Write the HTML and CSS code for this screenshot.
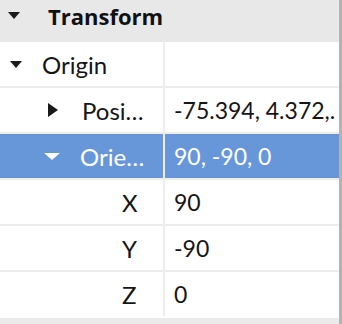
FILE: index.html
```html
<!DOCTYPE html>
<html lang="en">
<head>
  <meta charset="UTF-8">
  <meta name="viewport" content="width=device-width, initial-scale=1.0">
  <title>Properties - Transform</title>
  <link rel="stylesheet" href="styles.css">
</head>
<body>
  <div class="panel">
    <div class="section-header">
      <span class="arrow arrow-down header-arrow"></span>
      <span class="section-title">Transform</span>
    </div>

    <div class="tree">
      <div class="cell name level-0">
        <span class="arrow arrow-down"></span>
        <span class="label">Origin</span>
      </div>
      <div class="cell value"></div>

      <div class="cell name level-1">
        <span class="arrow arrow-right"></span>
        <span class="label">Position</span>
      </div>
      <div class="cell value">-75.394, 4.372,.</div>

      <div class="cell name level-1 selected">
        <span class="arrow arrow-down white"></span>
        <span class="label">Orientation</span>
      </div>
      <div class="cell value selected">90, -90, 0</div>

      <div class="cell name level-2">
        <span class="label">X</span>
      </div>
      <div class="cell value">90</div>

      <div class="cell name level-2">
        <span class="label">Y</span>
      </div>
      <div class="cell value">-90</div>

      <div class="cell name level-2">
        <span class="label">Z</span>
      </div>
      <div class="cell value">0</div>
    </div>
    <div class="footer"></div>
  </div>
</body>
</html>
```

FILE: styles.css
```css
body {
  margin: 0;
  padding: 0;
  font-family: Lato, "Open Sans", sans-serif;
  background-color: #fff;
}
.panel {
  width: 339px;
  height: 324px;
  border-right: 3px solid #b3b3b3;
  display: flex;
  flex-direction: column;
  overflow: hidden;
}
.section-header {
  height: 42px;
  flex-shrink: 0;
  background-color: #e8e8e8;
  display: flex;
  align-items: center;
  padding: 0 0 10px 8px;
  box-sizing: border-box;
}
.section-title {
  font-family: "Open Sans", sans-serif;
  font-weight: bold;
  font-size: 22px;
  color: #111;
}
.tree {
  display: grid;
  grid-template-columns: 163px 1fr;
  grid-auto-rows: 44px;
  column-gap: 2px;
  row-gap: 2px;
  background-color: #ededed;
}
.cell {
  background-color: #fff;
  display: flex;
  align-items: center;
  font-size: 24px;
  color: #151515;
  white-space: nowrap;
  overflow: hidden;
}
.name {
  padding-right: 11px;
  box-sizing: border-box;
}
.label {
  overflow: hidden;
  text-overflow: ellipsis;
}
.level-0 {
  padding-left: 10px;
}
.level-1 {
  padding-left: 48px;
}
.level-2 {
  padding-left: 122px;
}
.value {
  padding-left: 9px;
  font-size: 23px;
}
.selected {
  background-color: #6897d9;
  color: #fff;
}
.arrow {
  flex-shrink: 0;
  width: 0;
  height: 0;
  margin-right: 20px;
}
.arrow-down {
  border-left: 6px solid transparent;
  border-right: 6px solid transparent;
  border-top: 7px solid #1a1a1a;
}
.header-arrow {
  margin-right: 28px;
  margin-top: -2px;
}
.arrow-down.white {
  border-left-width: 8px;
  border-right-width: 8px;
  border-top: 7px solid #fff;
  margin-left: -4px;
}
.arrow-right {
  border-top: 7px solid transparent;
  border-bottom: 7px solid transparent;
  border-left: 10px solid #1a1a1a;
  margin-right: 24px;
}
.footer {
  flex: 1;
  margin-top: 2px;
  background-color: #ebebeb;
}
```
